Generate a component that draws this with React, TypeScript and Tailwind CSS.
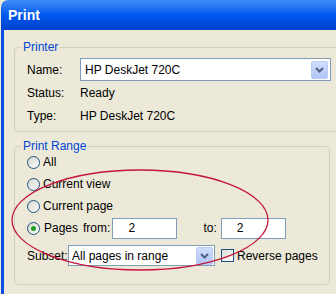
import React from "react";

function Chevron() {
  return (
    <svg width="9" height="6" viewBox="0 0 9 6">
      <path d="M1 1 L4.5 4.5 L8 1" fill="none" stroke="#4d6185" strokeWidth="2" />
    </svg>
  );
}

function DropButton() {
  return (
    <div className="w-[17px] h-[18px] rounded-[2px] border border-[#b9cdf6] bg-gradient-to-b from-[#cfdcfc] to-[#b2c6f5] flex items-center justify-center">
      <Chevron />
    </div>
  );
}

function Radio({ checked }: { checked?: boolean }) {
  return (
    <span className="w-[13px] h-[13px] rounded-full border border-[#1c5180] bg-gradient-to-br from-[#d6d5cc] to-white flex items-center justify-center shrink-0">
      {checked && <span className="w-[5px] h-[5px] rounded-full bg-[#21a121]" />}
    </span>
  );
}

function RadioRow({ label, checked }: { label: string; checked?: boolean }) {
  return (
    <div className="h-[22px] flex items-center pl-[6px] gap-[3px]">
      <Radio checked={checked} />
      <span>{label}</span>
    </div>
  );
}

function TextBox({ value }: { value: string }) {
  return (
    <div className="w-[65px] h-[21px] border border-[#7f9db9] bg-white flex items-center pl-[15px]">
      {value}
    </div>
  );
}

export default function App() {
  return (
    <div className="relative w-[336px] h-[294px] overflow-hidden bg-[#ece9d8] font-['Liberation_Sans',Arial,sans-serif] text-[12px] text-black leading-[14px]">
      {/* title bar */}
      <div className="h-[30px] ml-[1px] rounded-tl-[7px] bg-gradient-to-b from-[#3d8df6] via-[#0058ee] to-[#0042cc] flex items-center pl-[7px] text-white font-bold text-[14px]">
        Print
      </div>

      <div className="flex h-[264px]">
        <div className="w-[3px] ml-[1px] bg-[#0a4ee4]" />
        <div className="flex-1 pl-[10px]">
          {/* Printer group */}
          <fieldset className="mt-[10px] -mr-[20px] border border-[#d0d0bf] rounded-[4px] pl-[6px] pb-[8px]">
            <legend className="px-[2px] text-[#0046d5]">Printer</legend>
            <div className="mt-[4px] h-[23px] flex items-center">
              <span className="w-[59px] pl-[6px]">Name:</span>
              <div className="w-[251px] h-[23px] border border-[#7f9db9] bg-white flex items-center justify-between pl-[4px] pr-[2px]">
                <span>HP DeskJet 720C</span>
                <DropButton />
              </div>
            </div>
            <div className="mt-[5px] h-[14px] flex items-center">
              <span className="w-[59px] pl-[6px]">Status:</span>
              <span>Ready</span>
            </div>
            <div className="mt-[9px] h-[14px] flex items-center">
              <span className="w-[59px] pl-[6px]">Type:</span>
              <span>HP DeskJet 720C</span>
            </div>
          </fieldset>

          {/* Print Range group */}
          <fieldset className="mt-[7px] w-[316px] border border-[#d0d0bf] rounded-[4px] pl-[6px] pb-[18px]">
            <legend className="px-[2px] text-[#0046d5]">Print Range</legend>
            <div className="-mt-[2px]">
              <RadioRow label="All" />
              <RadioRow label="Current view" />
              <RadioRow label="Current page" />
              <div className="h-[22px] flex items-center pl-[6px]">
                <Radio checked />
                <span className="ml-[4px]">Pages</span>
                <span className="ml-[5px]">from:</span>
                <div className="ml-[2px]">
                  <TextBox value="2" />
                </div>
                <span className="ml-[26px]">to:</span>
                <div className="ml-[4px]">
                  <TextBox value="2" />
                </div>
              </div>
            </div>
            <div className="mt-[6px] h-[21px] flex items-center pl-[6px]">
              <span className="w-[41px] whitespace-nowrap">Subset:</span>
              <div className="w-[147px] h-[21px] border border-[#7f9db9] bg-white flex items-center justify-between pl-[3px] pr-[1px]">
                <span>All pages in range</span>
                <DropButton />
              </div>
              <span className="ml-[6px] w-[13px] h-[13px] border border-[#1c5180] bg-gradient-to-br from-[#dcdbd3] to-white shrink-0" />
              <span className="ml-[3px]">Reverse pages</span>
            </div>
          </fieldset>
        </div>
      </div>

      {/* red annotation ellipse */}
      <svg className="absolute inset-0 pointer-events-none" width="336" height="294" viewBox="0 0 336 294">
        <ellipse cx="140" cy="220" rx="128" ry="50" fill="none" stroke="#c4163c" strokeWidth="1.3" />
      </svg>
    </div>
  );
}
